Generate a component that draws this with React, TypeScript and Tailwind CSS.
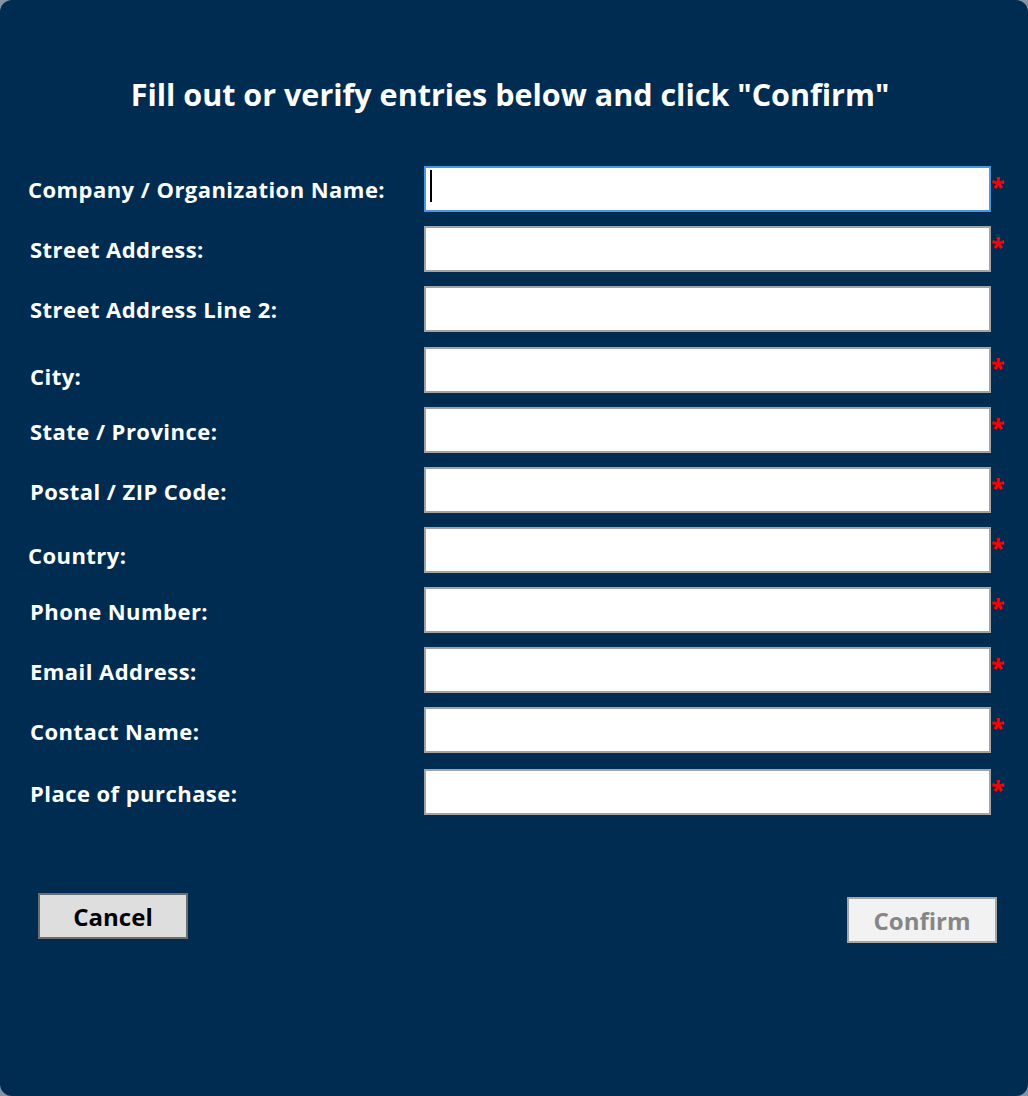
import { useState } from 'react';

type Field = {
  label: string;
  required: boolean;
  mt: string; // gap above input
  labelX: string;
  labelY: string;
};

const fields: Field[] = [
  { label: 'Company / Organization Name:', required: true, mt: 'mt-0', labelX: 'pl-[28px]', labelY: 'pt-[9px]' },
  { label: 'Street Address:', required: true, mt: 'mt-[14px]', labelX: 'pl-[30px]', labelY: 'pt-[9px]' },
  { label: 'Street Address Line 2:', required: false, mt: 'mt-[14px]', labelX: 'pl-[30px]', labelY: 'pt-[9px]' },
  { label: 'City:', required: true, mt: 'mt-[15px]', labelX: 'pl-[30px]', labelY: 'pt-[15px]' },
  { label: 'State / Province:', required: true, mt: 'mt-[14px]', labelX: 'pl-[30px]', labelY: 'pt-[10px]' },
  { label: 'Postal / ZIP Code:', required: true, mt: 'mt-[14px]', labelX: 'pl-[30px]', labelY: 'pt-[10px]' },
  { label: 'Country:', required: true, mt: 'mt-[14px]', labelX: 'pl-[28px]', labelY: 'pt-[14px]' },
  { label: 'Phone Number:', required: true, mt: 'mt-[14px]', labelX: 'pl-[30px]', labelY: 'pt-[10px]' },
  { label: 'Email Address:', required: true, mt: 'mt-[14px]', labelX: 'pl-[30px]', labelY: 'pt-[10px]' },
  { label: 'Contact Name:', required: true, mt: 'mt-[14px]', labelX: 'pl-[30px]', labelY: 'pt-[10px]' },
  { label: 'Place of purchase:', required: true, mt: 'mt-[16px]', labelX: 'pl-[30px]', labelY: 'pt-[10px]' },
];

export default function App() {
  const [values, setValues] = useState<string[]>(fields.map(() => ''));

  return (
    <div className="h-[1096px] w-[1028px] bg-[#8494a5] font-['Open_Sans',sans-serif]">
      <div className="flex h-full w-full flex-col rounded-[12px] bg-[#002c52]">
        {/* Heading */}
        <h1 className="mt-[73px] pr-[8px] text-center text-[30.5px] font-bold leading-[42px] text-white">
          Fill out or verify entries below and click "Confirm"
        </h1>

        {/* Form rows */}
        <div className="mt-[51px] flex flex-col">
          {fields.map((f, i) => (
            <div key={f.label} className={`flex ${f.mt}`}>
              <label
                className={`w-[425px] shrink-0 text-[22px] font-bold leading-[28px] tracking-[0.45px] text-white ${f.labelX} ${f.labelY}`}
              >
                {f.label}
              </label>
              <div className="relative -ml-px">
                <input
                  type="text"
                  value={values[i]}
                  onChange={(e) => {
                    const next = [...values];
                    next[i] = e.target.value;
                    setValues(next);
                  }}
                  className={`h-[46px] w-[567px] border-2 bg-white px-[5px] text-[20px] text-black outline-none ${
                    i === 0 ? 'border-[#4a98e0]' : 'border-[#a3a3a3]'
                  }`}
                />
                {i === 0 && values[0] === '' && (
                  <span className="pointer-events-none absolute left-[6px] top-[4px] h-[32px] w-[2px] bg-black" />
                )}
              </div>
              <span className="pt-[6px] text-[25px] font-bold leading-[28px] text-[#ff0000]">
                {f.required ? '*' : ''}
              </span>
            </div>
          ))}
        </div>

        {/* Buttons */}
        <div className="mt-[78px] flex items-start justify-between pl-[38px] pr-[31px]">
          <button className="h-[46px] w-[150px] border-2 border-[#6e6e6e] bg-[#dedede] pt-[2px] text-[24px] font-bold leading-none text-black">
            Cancel
          </button>
          <button
            disabled
            className="mt-[4px] h-[46px] w-[150px] border-2 border-[#a6a6a6] bg-[#f2f2f2] pt-[2px] text-[24px] font-bold leading-none text-[#868686]"
          >
            Confirm
          </button>
        </div>
      </div>
    </div>
  );
}
